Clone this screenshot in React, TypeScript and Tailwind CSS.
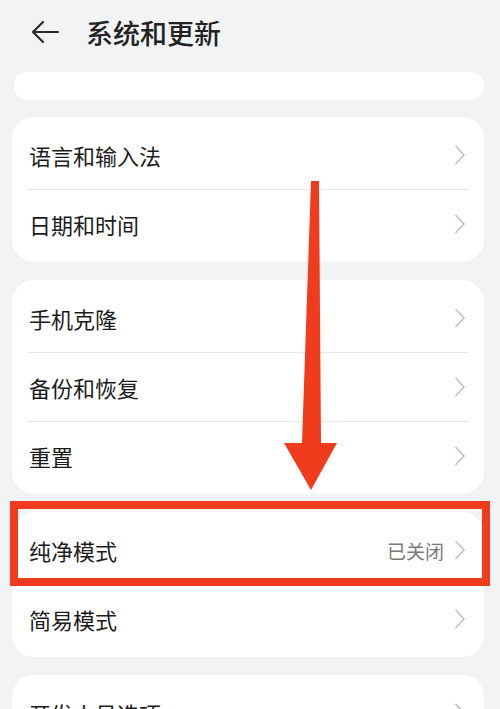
import React from "react";

const font = { fontFamily: '"Noto Sans CJK SC", "Noto Sans", sans-serif' };

function Chevron() {
  return (
    <svg width="12" height="20" viewBox="0 0 12 20" className="shrink-0">
      <path d="M2 1.5 L10 10 L2 18.5" fill="none" stroke="#c4c4c4" strokeWidth="1.8" strokeLinecap="round" strokeLinejoin="round" />
    </svg>
  );
}

function Row({ label, value, divider }: { label: string; value?: string; divider?: boolean }) {
  return (
    <div className="relative">
      <div className="flex h-[68px] items-center pl-[17px] pr-[18px]">
        <span className="flex-1 text-[22px] leading-none text-[#1c1c1c]">{label}</span>
        {value && <span className="mr-[10px] text-[19px] leading-none text-[#7a7a7a]">{value}</span>}
        <Chevron />
      </div>
      {divider && <div className="ml-[16px] mr-[16px] h-px bg-[#e8e8e8]" />}
    </div>
  );
}

function Card({ children, className = "" }: { children: React.ReactNode; className?: string }) {
  return <div className={`ml-3 mr-4 rounded-[22px] bg-white py-1 ${className}`}>{children}</div>;
}

export default function App() {
  return (
    <div className="relative h-[709px] w-[500px] overflow-hidden bg-[#f2f3f5]" style={font}>
      <div className="flex h-[64px] items-center">
        <svg width="30" height="24" viewBox="0 0 30 24" className="ml-[31px]">
          <path d="M2 12 H27 M12 2 L2 12 L12 22" fill="none" stroke="#2a2a2a" strokeWidth="2.2" strokeLinecap="round" strokeLinejoin="round" />
        </svg>
        <span className="ml-[25px] text-[27px] font-medium leading-none text-[#222]">系统和更新</span>
      </div>

      <div className="relative ml-[14px] mr-4 mt-[8px] h-[28px] overflow-hidden rounded-[16px] bg-white" />

      <Card className="mt-[17px]">
        <Row label="语言和输入法" divider />
        <Row label="日期和时间" />
      </Card>

      <Card className="mt-[18px]">
        <Row label="手机克隆" divider />
        <Row label="备份和恢复" divider />
        <Row label="重置" />
      </Card>

      <Card className="mt-[18px]">
        <Row label="纯净模式" value="已关闭" divider />
        <Row label="简易模式" />
      </Card>

      <Card className="mt-[18px]">
        <Row label="开发人员选项" />
      </Card>

      <div className="absolute left-[10px] top-[501px] h-[85px] w-[480px] border-[8px] border-[#f03b1e]" />

      <svg className="absolute left-0 top-0" width="500" height="709" viewBox="0 0 500 709">
        <polygon points="311,181 319,181 321,443 337,443 311,490 284,443 302,443" fill="#f13b1d" />
      </svg>
    </div>
  );
}
